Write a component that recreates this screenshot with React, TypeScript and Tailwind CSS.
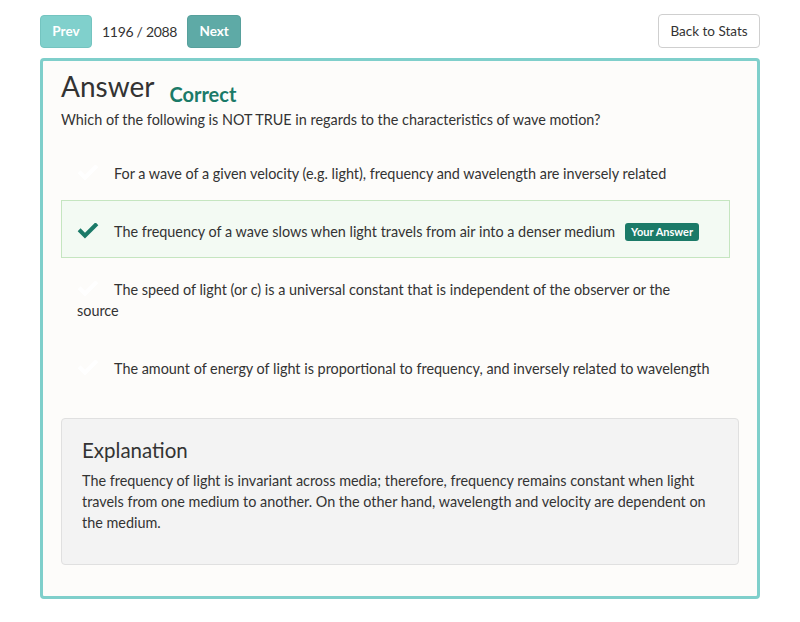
import { useState } from 'react'

type Option = { id: number; text: string }

const options: Option[] = [
    {
        id: 1,
        text: 'For a wave of a given velocity (e.g. light), frequency and wavelength are inversely related',
    },
    {
        id: 2,
        text: 'The frequency of a wave slows when light travels from air into a denser medium',
    },
    {
        id: 3,
        text: 'The speed of light (or c) is a universal constant that is independent of the observer or the source',
    },
    {
        id: 4,
        text: 'The amount of energy of light is proportional to frequency, and inversely related to wavelength',
    },
]

function Check({ className }: { className: string }) {
    return (
        <svg viewBox="0 0 24 18" className={className} fill="currentColor">
            <path d="M8.6 17.4 0.4 9.2 3.6 6 8.6 11 20.4 -0.8 23.6 2.4z" />
        </svg>
    )
}

export default function App() {
    const [current] = useState(1196)
    const answerId = 2

    return (
        <div
            className="bg-white text-[#333] min-h-[622px] px-10 pt-[14px]"
            style={{ fontFamily: 'Lato, "Open Sans", sans-serif' }}
        >
            <div className="flex items-center h-[34px]">
                <button className="h-[33px] w-[52px] rounded bg-[#80d0cc] border border-[#74c4c0] text-white font-bold text-[13.5px]">
                    Prev
                </button>
                <span className="ml-[10px] text-[14px] tracking-[-0.3px]">
                    {current} / 2088
                </span>
                <button className="ml-[10px] h-[33px] w-[54px] rounded bg-[#5eaaa6] border border-[#57a09c] text-white font-bold text-[13.5px]">
                    Next
                </button>
                <button className="ml-auto h-[34px] w-[102px] rounded border border-[#cfcfcf] bg-white text-[13.5px]">
                    Back to Stats
                </button>
            </div>

            <div className="mt-[10px] border-[3px] border-[#7fcfcb] rounded bg-[#fdfcfa] px-[18px] pt-[8px] pb-[31px]">
                <div className="flex items-end gap-[15px]">
                    <h1 className="text-[28px] leading-[34px]">Answer</h1>
                    <span className="text-[20px] font-bold text-[#1b7a68] leading-[26px] -mb-[4px]">
                        Correct
                    </span>
                </div>
                <p className="text-[14.4px] leading-[21px] mt-[6px]">
                    Which of the following is NOT TRUE in regards to the
                    characteristics of wave motion?
                </p>

                <div className="mt-[12px] pr-[9px]">
                    {options.map((o) => (
                        <div
                            key={o.id}
                            className={
                                o.id === answerId
                                    ? 'border border-[#c5e5c0] bg-[#f3faf3] pl-[15px] pr-4 pt-[20px] pb-[15px] text-[14.4px] leading-[21px]'
                                    : 'border border-transparent pl-[15px] pr-4 pt-[20px] pb-[15px] text-[14.4px] leading-[21px]'
                            }
                        >
                            <span className="inline-block w-[37px] align-[-2px]">
                                <Check
                                    className={
                                        o.id === answerId
                                            ? 'w-[22px] h-[16px] text-[#1b7a68]'
                                            : 'w-[22px] h-[16px] text-white'
                                    }
                                />
                            </span>
                            {o.text}
                            {o.id === answerId && (
                                <span className="ml-[10px] inline-block rounded-[3px] bg-[#1b7a68] text-white font-bold text-[11px] leading-[18px] px-[6px] align-[1px]">
                                    Your Answer
                                </span>
                            )}
                        </div>
                    ))}
                </div>

                <div className="mt-[23px] border border-[#e0e0e0] rounded bg-[#f3f3f3] px-5 pt-[17px] pb-[31px]">
                    <h2 className="text-[20.5px] leading-[28px]">Explanation</h2>
                    <p className="mt-[6px] text-[14.4px] leading-[21px]">
                        The frequency of light is invariant across media;
                        therefore, frequency remains constant when light
                        travels from one medium to another. On the other hand,
                        wavelength and velocity are dependent on the medium.
                    </p>
                </div>
            </div>
        </div>
    )
}
